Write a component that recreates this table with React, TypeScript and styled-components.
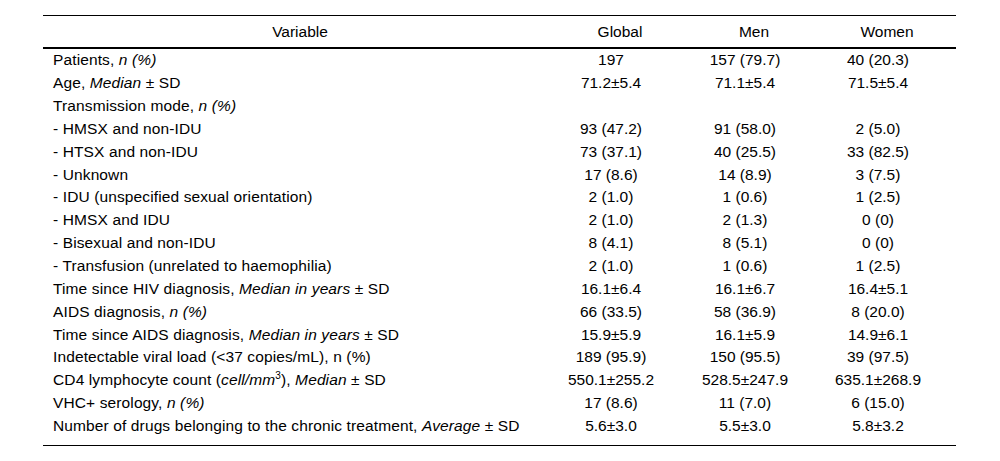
import React from "react";
import styled, { createGlobalStyle } from "styled-components";

const Global = createGlobalStyle`
  html, body { margin: 0; padding: 0; background: #fff; }
  body { font-family: "Liberation Sans", Arial, sans-serif; color: #000; }
`;

const Page = styled.div`
  padding: 15px 0 0 43px;
`;

const Table = styled.div`
  width: 913px;
  font-size: 15.5px;
  border-bottom: 1px solid #000;
`;

const Columns = `
  display: grid;
  grid-template-columns: 514px 126px 142px 124px;
  padding-right: 7px;
`;

const HeadRow = styled.div`
  ${Columns}
  height: 31px;
  align-items: center;
  border-top: 1px solid #000;
  border-bottom: 2px solid #000;
`;

const HeadCell = styled.div`
  text-align: center;
  white-space: nowrap;
`;

const Body = styled.div`
  padding-bottom: 7.5px;
`;

const Row = styled.div`
  ${Columns}
  height: 22.85px;
  align-items: center;
`;

const Label = styled.div`
  padding-left: 10px;
  white-space: nowrap;
  letter-spacing: 0.12px;
`;

const Value = styled.div`
  text-align: center;
  padding-right: 18px;
  white-space: nowrap;
`;

const Sup = styled.sup`
  font-size: 10px;
  line-height: 0;
  vertical-align: 6px;
`;

type R = { label: React.ReactNode; g: string; m: string; w: string };

const rows: R[] = [
  { label: <>Patients, <i>n (%)</i></>, g: "197", m: "157 (79.7)", w: "40 (20.3)" },
  { label: <>Age, <i>Median</i> ± SD</>, g: "71.2±5.4", m: "71.1±5.4", w: "71.5±5.4" },
  { label: <>Transmission mode, <i>n (%)</i></>, g: "", m: "", w: "" },
  { label: "- HMSX and non-IDU", g: "93 (47.2)", m: "91 (58.0)", w: "2 (5.0)" },
  { label: "- HTSX and non-IDU", g: "73 (37.1)", m: "40 (25.5)", w: "33 (82.5)" },
  { label: "- Unknown", g: "17 (8.6)", m: "14 (8.9)", w: "3 (7.5)" },
  { label: "- IDU (unspecified sexual orientation)", g: "2 (1.0)", m: "1 (0.6)", w: "1 (2.5)" },
  { label: "- HMSX and IDU", g: "2 (1.0)", m: "2 (1.3)", w: "0 (0)" },
  { label: "- Bisexual and non-IDU", g: "8 (4.1)", m: "8 (5.1)", w: "0 (0)" },
  { label: "- Transfusion (unrelated to haemophilia)", g: "2 (1.0)", m: "1 (0.6)", w: "1 (2.5)" },
  { label: <>Time since HIV diagnosis, <i>Median in years</i> ± SD</>, g: "16.1±6.4", m: "16.1±6.7", w: "16.4±5.1" },
  { label: <>AIDS diagnosis, <i>n (%)</i></>, g: "66 (33.5)", m: "58 (36.9)", w: "8 (20.0)" },
  { label: <>Time since AIDS diagnosis, <i>Median in years</i> ± SD</>, g: "15.9±5.9", m: "16.1±5.9", w: "14.9±6.1" },
  { label: "Indetectable viral load (<37 copies/mL), n (%)", g: "189 (95.9)", m: "150 (95.5)", w: "39 (97.5)" },
  { label: <>CD4 lymphocyte count (<i>cell/mm</i><Sup>3</Sup>), <i>Median</i> ± SD</>, g: "550.1±255.2", m: "528.5±247.9", w: "635.1±268.9" },
  { label: <>VHC+ serology, <i>n (%)</i></>, g: "17 (8.6)", m: "11 (7.0)", w: "6 (15.0)" },
  { label: <>Number of drugs belonging to the chronic treatment, <i>Average</i> ± SD</>, g: "5.6±3.0", m: "5.5±3.0", w: "5.8±3.2" },
];

export default function App() {
  return (
    <Page>
      <Global />
      <Table>
        <HeadRow>
          <HeadCell>Variable</HeadCell>
          <HeadCell>Global</HeadCell>
          <HeadCell>Men</HeadCell>
          <HeadCell>Women</HeadCell>
        </HeadRow>
        <Body>
          {rows.map((r, i) => (
            <Row key={i}>
              <Label>{r.label}</Label>
              <Value>{r.g}</Value>
              <Value>{r.m}</Value>
              <Value>{r.w}</Value>
            </Row>
          ))}
        </Body>
      </Table>
    </Page>
  );
}
